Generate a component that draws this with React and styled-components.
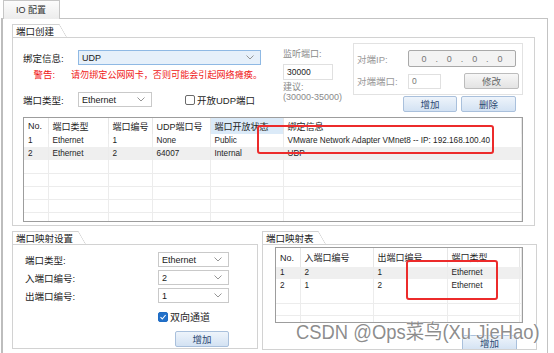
import React from 'react';
import styled, { createGlobalStyle } from 'styled-components';

const GlobalStyle = createGlobalStyle`
  html, body {
    margin: 0;
    padding: 0;
    background: #fff;
  }
  * {
    box-sizing: border-box;
  }
`;

const Root = styled.div`
  position: relative;
  width: 554px;
  height: 353px;
  overflow: hidden;
  background: #fff;
  font-family: "Liberation Sans", "Noto Sans CJK SC", sans-serif;
  font-size: 9.5px;
  color: #1e1e1e;
`;

const TabStrip = styled.div`
  display: flex;
  height: 18px;
  padding-left: 3px;
`;

const TopTab = styled.div`
  width: 57px;
  height: 19px;
  padding-left: 12px;
  line-height: 18px;
  font-size: 9px;
  color: #333;
  background: linear-gradient(#fcfcfc, #ececec);
  border: 1px solid #c6c6c6;
  border-bottom: none;
  position: relative;
  z-index: 1;
`;

const Panel = styled.div`
  display: flex;
  flex-direction: column;
  gap: 5px;
  width: 547px;
  height: 340px;
  margin-left: 1px;
  padding: 5px 0 0 9px;
  border: 1px solid #c3c3c3;
  border-left: 2px solid #bdbdbd;
  border-bottom: none;
`;

const Group = styled.div`
  display: flex;
  flex-direction: column;
  width: ${p => p.$w}px;
`;

const GroupTab = styled.div`
  position: relative;
  align-self: flex-start;
  height: 13px;
  padding: 0 ${p => p.$pr || 4}px 0 3px;
  line-height: 13px;
  border-top: 1px solid #d2d2d2;
  border-left: 1px solid #d2d2d2;
  color: #222;
  &::after {
    content: '';
    position: absolute;
    left: 100%;
    top: -1px;
    width: 8px;
    height: 14px;
    background: linear-gradient(to top right, transparent calc(50% - 0.6px), #d2d2d2, transparent calc(50% + 0.6px));
  }
`;

const GroupBox = styled.div`
  height: ${p => p.$h}px;
  border: 1px solid #d2d2d2;
  padding: ${p => p.$pad};
  display: flex;
  flex-direction: column;
  overflow: hidden;
`;

/* ---- 端口创建 ---- */

const TopArea = styled.div`
  display: flex;
  height: 69px;
`;

const LeftCol = styled.div`
  width: 239px;
  padding-top: 7px;
  display: flex;
  flex-direction: column;
`;

const FormRow = styled.div`
  display: flex;
  align-items: center;
  height: ${p => p.$h || 15}px;
  margin-top: ${p => p.$mt || 0}px;
`;

const Label = styled.span`
  width: ${p => p.$w || 39}px;
  text-align: ${p => p.$align || 'right'};
  margin-right: ${p => p.$gap ?? 16}px;
  color: ${p => p.$color || '#1e1e1e'};
  white-space: nowrap;
`;

const Warning = styled.span`
  color: #f01818;
  font-size: 9.1px;
  white-space: nowrap;
`;

const SelectBox = styled.div`
  display: flex;
  align-items: center;
  justify-content: space-between;
  width: ${p => p.$w}px;
  height: 15px;
  padding: 0 6px 0 3px;
  border: 1px solid ${p => (p.$focused ? '#8fb9e4' : '#c9c9c9')};
  background: ${p => (p.$focused ? '#e6f0fa' : '#fff')};
  font-size: 9px;
  color: #1a1a1a;
`;

const Check = styled.span`
  display: inline-flex;
  align-items: center;
  justify-content: center;
  width: 10px;
  height: 10px;
  margin-right: 2px;
  border-radius: 2px;
  border: 1px solid ${p => (p.$checked ? '#1f6cc4' : '#6a6a6a')};
  background: ${p => (p.$checked ? '#2270c9' : '#fff')};
`;

const CheckLabel = styled.label`
  display: inline-flex;
  align-items: center;
  white-space: nowrap;
  margin-left: ${p => p.$ml || 0}px;
  margin-top: ${p => p.$mt || 0}px;
  font-size: ${p => p.$fs || 9.5}px;
`;

const MidCol = styled.div`
  width: 52px;
  margin-left: 21px;
  padding-top: 6px;
  display: flex;
  flex-direction: column;
  color: #8a8a8a;
  line-height: 10px;
  font-size: 9px;
  white-space: nowrap;
`;

const TextInput = styled.div`
  width: ${p => p.$w}px;
  height: ${p => p.$h || 16}px;
  margin: ${p => p.$m || 0};
  padding-left: 3px;
  border: 1px solid #e0e0e0;
  background: #fff;
  font-size: 8.5px;
  line-height: ${p => (p.$h || 16) - 2}px;
  color: ${p => p.$color || '#222'};
`;

const RightCol = styled.div`
  width: 173px;
  margin-left: 18px;
  display: flex;
  flex-direction: column;
`;

const PeerBox = styled.div`
  height: 54px;
  border: 1px solid #e2e2e2;
  padding: 6px 0 0 3px;
  display: flex;
  flex-direction: column;
  gap: 6px;
  color: #999;
`;

const IpField = styled.div`
  display: flex;
  justify-content: space-around;
  align-items: center;
  width: 108px;
  height: 17px;
  padding: 0 8px;
  border: 1px solid #a9a9a9;
  border-radius: 2px;
  background: #f3f3f3;
  color: #777;
  font-size: 9px;
`;

const Button = styled.div`
  display: flex;
  align-items: center;
  justify-content: center;
  width: ${p => p.$w || 55}px;
  height: 16px;
  margin: ${p => p.$m || 0};
  font-size: 9.5px;
  border: 1px solid ${p => (p.$gray ? '#bcbcbc' : '#a9c0dc')};
  background: ${p => (p.$gray ? 'linear-gradient(#f7f7f7, #e3e3e3)' : 'linear-gradient(#eef4fb, #d3e2f3)')};
  color: ${p => (p.$gray ? '#666' : '#2d4a72')};
  border-radius: 2px;
  flex-shrink: 0;
  justify-self: ${p => p.$end ? 'end' : 'auto'};
`;

const ButtonRow = styled.div`
  display: flex;
  justify-content: flex-end;
  gap: 4px;
  margin-top: 1px;
  padding-right: 7px;
`;

/* ---- tables ---- */

const TableWrap = styled.div`
  width: ${p => p.$w}px;
  height: ${p => p.$h}px;
  margin-top: ${p => p.$mt || 0}px;
  border: 1px solid #9d9d9d;
  overflow: hidden;
  background: #fff;
  flex-shrink: 0;
`;

const Grid = styled.table`
  width: 100%;
  table-layout: fixed;
  border-collapse: collapse;
  font-size: 8.2px;
  color: #1e1e1e;
`;

const Th = styled.th`
  height: ${p => p.$h}px;
  padding: 0 0 0 4px;
  font-weight: normal;
  text-align: left;
  white-space: nowrap;
  overflow: hidden;
  font-size: 9px;
  border-right: 1px solid #e6e6e6;
  background: ${p => (p.$active ? '#dbeaf8' : '#fff')};
`;

const Tr = styled.tr`
  background: ${p => (p.$shade ? '#efefef' : '#fff')};
`;

const Td = styled.td`
  height: ${p => p.$h}px;
  padding: 0 0 0 4px;
  white-space: nowrap;
  overflow: visible;
  border-right: 1px solid #ececec;
  border-bottom: 1px solid ${p => (p.$line ? '#ececec' : 'transparent')};
`;

const MapForm = styled.div`
  display: grid;
  grid-template-columns: 133px 71px;
  row-gap: 3px;
  align-items: center;
`;

const MapTableBox = styled.div`
  display: flex;
  flex-direction: column;
  align-items: flex-start;
`;

const BottomRow = styled.div`
  display: flex;
  gap: 4px;
`;

/* ---- overlays ---- */

const Mark = styled.div`
  position: absolute;
  border: 2px solid #ec2b2b;
  border-radius: 3px;
  pointer-events: none;
`;

const Watermark = styled.div`
  position: absolute;
  left: 296px;
  top: 322px;
  font-size: 20px;
  line-height: 20px;
  white-space: nowrap;
  color: rgba(120, 120, 120, 0.85);
  text-shadow: 0 0 1px #fff, 0 0 2px #fff;
  transform: scaleX(0.92);
  transform-origin: left center;
`;

const Chevron = () => (
  <svg width="8" height="5" viewBox="0 0 8 5">
    <polyline points="0.5,0.5 4,4 7.5,0.5" fill="none" stroke="#8a8a8a" strokeWidth="0.9" />
  </svg>
);

const Tick = () => (
  <svg width="8" height="8" viewBox="0 0 8 8">
    <polyline points="1.5,4.2 3.3,6 6.6,2" fill="none" stroke="#fff" strokeWidth="1.1" />
  </svg>
);

const Select = ({ value, w, focused }) => (
  <SelectBox $w={w} $focused={focused}>
    <span>{value}</span>
    <Chevron />
  </SelectBox>
);

const portCols = [24, 60, 44, 58, 73, null];
const portHead = ['No.', '端口类型', '端口编号', 'UDP端口号', '端口开放状态', '绑定信息'];
const portRows = [
  ['1', 'Ethernet', '1', 'None', 'Public', 'VMware Network Adapter VMnet8 -- IP: 192.168.100.40'],
  ['2', 'Ethernet', '2', '64007', 'Internal', 'UDP'],
];

const mapCols = [24, 73, 74, 72, null];
const mapHead = ['No.', '入端口编号', '出端口编号', '端口类型', ''];
const mapRows = [
  ['1', '2', '1', 'Ethernet', ''],
  ['2', '1', '2', 'Ethernet', ''],
];

const DataTable = ({ cols, head, rows, empty, headH, rowH, shadeFirst, activeCol }) => (
  <Grid>
    <colgroup>
      {cols.map((c, i) => (
        <col key={i} style={c ? { width: c } : undefined} />
      ))}
    </colgroup>
    <thead>
      <tr>
        {head.map((h, i) => (
          <Th key={i} $h={headH} $active={i === activeCol}>{h}</Th>
        ))}
      </tr>
    </thead>
    <tbody>
      {rows.map((r, i) => (
        <Tr key={i} $shade={shadeFirst ? i === 0 : i === 1}>
          {r.map((c, j) => (
            <Td key={j} $h={rowH}>{c}</Td>
          ))}
        </Tr>
      ))}
      {Array.from({ length: empty }).map((_, i) => (
        <Tr key={'e' + i}>
          {cols.map((_, j) => (
            <Td key={j} $h={rowH} $line />
          ))}
        </Tr>
      ))}
    </tbody>
  </Grid>
);

const App = () => (
  <Root>
    <GlobalStyle />
    <TabStrip>
      <TopTab>IO 配置</TopTab>
    </TabStrip>
    <Panel>
      <Group $w={523}>
        <GroupTab $pr={5}>端口创建</GroupTab>
        <GroupBox $h={189} $pad="5px 11px 0 10px">
          <TopArea>
            <LeftCol>
              <FormRow>
                <Label>绑定信息:</Label>
                <Select value="UDP" w={183} focused />
              </FormRow>
              <FormRow $h={12} $mt={3}>
                <Label $color="#f01818">警告:</Label>
                <Warning>请勿绑定公网网卡，否则可能会引起网络瘫痪。</Warning>
              </FormRow>
              <FormRow $mt={12}>
                <Label>端口类型:</Label>
                <Select value="Ethernet" w={74} />
                <CheckLabel $ml={33}>
                  <Check />
                  开放UDP端口
                </CheckLabel>
              </FormRow>
            </LeftCol>
            <MidCol>
              <span>监听端口:</span>
              <TextInput $w={50} $m="5px 0 2px 0">30000</TextInput>
              <span>建议:</span>
              <span>(30000-35000)</span>
            </MidCol>
            <RightCol>
              <PeerBox>
                <FormRow $h={17}>
                  <Label $w={51} $gap={0} $align="left" $color="#9a9a9a">对端IP:</Label>
                  <IpField>
                    <span>0</span><span>.</span><span>0</span><span>.</span><span>0</span><span>.</span><span>0</span>
                  </IpField>
                </FormRow>
                <FormRow $h={16}>
                  <Label $w={51} $gap={0} $align="left" $color="#9a9a9a">对端端口:</Label>
                  <TextInput $w={33} $h={15} $color="#777">0</TextInput>
                  <Button $gray $m="0 0 0 23px">修改</Button>
                </FormRow>
              </PeerBox>
              <ButtonRow>
                <Button $w={54}>增加</Button>
                <Button>删除</Button>
              </ButtonRow>
            </RightCol>
          </TopArea>
          <TableWrap $w={500} $h={105} $mt={5}>
            <DataTable
              cols={portCols}
              head={portHead}
              rows={portRows}
              empty={5}
              headH={16}
              rowH={13}
              activeCol={4}
            />
          </TableWrap>
        </GroupBox>
      </Group>
      <BottomRow>
        <Group $w={246}>
          <GroupTab $pr={5}>端口映射设置</GroupTab>
          <GroupBox $h={105} $pad="7px 0 0 12px">
            <MapForm>
              <span>端口类型:</span>
              <Select value="Ethernet" w={71} />
              <span>入端口编号:</span>
              <Select value="2" w={71} />
              <span>出端口编号:</span>
              <Select value="1" w={71} />
              <span />
              <CheckLabel $mt={3} $fs={10}>
                <Check $checked>
                  <Tick />
                </Check>
                双向通道
              </CheckLabel>
              <span />
              <Button $w={54} $end $m="4px 0 0 0">增加</Button>
            </MapForm>
          </GroupBox>
        </Group>
        <Group $w={275}>
          <GroupTab $pr={4}>端口映射表</GroupTab>
          <GroupBox $h={106} $pad="2px 0 0 12px">
            <MapTableBox>
              <TableWrap $w={248} $h={76}>
                <DataTable
                  cols={mapCols}
                  head={mapHead}
                  rows={mapRows}
                  empty={3}
                  headH={19}
                  rowH={12}
                  shadeFirst
                />
              </TableWrap>
              <Button $w={55} $m="12px 0 0 187px">增加</Button>
            </MapTableBox>
          </GroupBox>
        </Group>
      </BottomRow>
    </Panel>
    <Mark style={{ left: 257, top: 125, width: 237, height: 29 }} />
    <Mark style={{ left: 406, top: 260, width: 92, height: 40 }} />
    <Watermark>CSDN @Ops菜鸟(Xu JieHao)</Watermark>
  </Root>
);

export default App;
